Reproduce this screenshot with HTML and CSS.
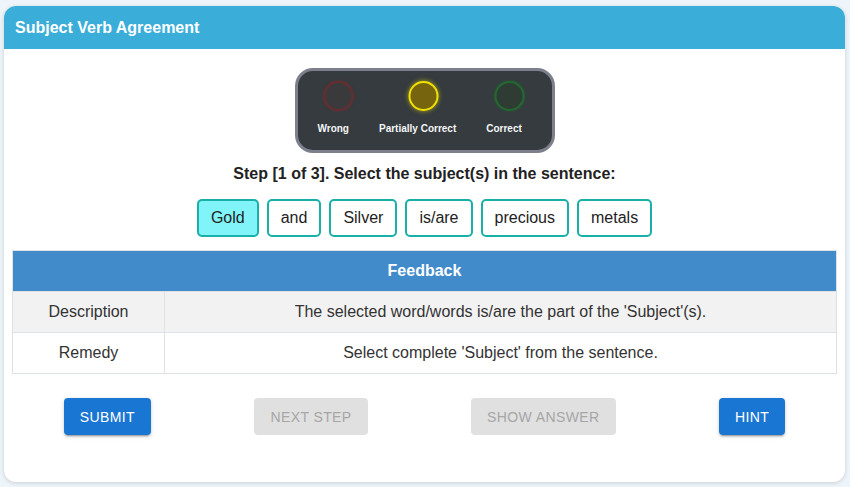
FILE: index.html
```html
<!DOCTYPE html>
<html>
<head>
<meta charset="utf-8">
<link rel="stylesheet" href="styles.css">
</head>
<body>
<div class="card">
  <div class="card-header">Subject Verb Agreement</div>
  <div class="card-body">
    <div class="lights">
      <div class="light-item">
        <span class="light red"></span>
        <span class="light-label">Wrong</span>
      </div>
      <div class="light-item">
        <span class="light yellow"></span>
        <span class="light-label">Partially Correct</span>
      </div>
      <div class="light-item">
        <span class="light green"></span>
        <span class="light-label">Correct</span>
      </div>
    </div>
    <div class="step">Step [1 of 3]. Select the subject(s) in the sentence:</div>
    <div class="words">
      <button class="word selected">Gold</button>
      <button class="word">and</button>
      <button class="word">Silver</button>
      <button class="word">is/are</button>
      <button class="word">precious</button>
      <button class="word">metals</button>
    </div>
    <table class="feedback">
      <thead>
        <tr><th colspan="2">Feedback</th></tr>
      </thead>
      <tbody>
        <tr class="shaded"><td class="label-cell">Description</td><td>The selected word/words is/are the part of the 'Subject'(s).</td></tr>
        <tr><td class="label-cell">Remedy</td><td>Select complete 'Subject' from the sentence.</td></tr>
      </tbody>
    </table>
    <div class="actions">
      <button class="btn primary">Submit</button>
      <button class="btn disabled">Next Step</button>
      <button class="btn disabled">Show Answer</button>
      <button class="btn primary">Hint</button>
    </div>
  </div>
</div>
</body>
</html>
```

FILE: styles.css
```css
html, body {
  margin: 0;
  padding: 0;
}
body {
  background: #eef5fa;
  font-family: "Liberation Sans", Arial, sans-serif;
  color: #212529;
  padding: 6px 5px 5px 4px;
  box-sizing: border-box;
  height: 487px;
}
.card {
  width: 841px;
  height: 476px;
  background: #ffffff;
  border-radius: 12px;
  overflow: hidden;
  box-shadow: 0 1px 4px rgba(0, 0, 0, 0.16);
}
.card-header {
  height: 43px;
  background: #3badd9;
  color: #ffffff;
  font-weight: bold;
  font-size: 16px;
  line-height: 43px;
  padding: 0 11px;
}
.card-body {
  padding: 0 8px;
  display: flex;
  flex-direction: column;
  align-items: center;
}
.lights {
  margin-top: 19px;
  width: 260px;
  height: 85px;
  box-sizing: border-box;
  border: 3px solid #7e7f8d;
  border-radius: 18px;
  background: #353b3e;
  display: flex;
  gap: 30px;
  padding: 10px 0 0 20px;
}
.light-item {
  display: flex;
  flex-direction: column;
  align-items: center;
}
.light {
  display: block;
  width: 26px;
  height: 26px;
  border-radius: 50%;
  transform: translateX(5.5px);
  border: 2px solid transparent;
}
.light.red {
  background: #3a3a3c;
  border-color: rgba(120, 40, 45, 0.7);
  box-shadow: 0 0 3px rgba(160, 40, 40, 0.45);
}
.light.yellow {
  background: #76640e;
  border-color: #f0e000;
  box-shadow: 0 0 5px rgba(240, 225, 0, 0.65);
}
.light.green {
  background: #2f3c33;
  border-color: rgba(30, 120, 45, 0.75);
  box-shadow: 0 0 3px rgba(30, 130, 50, 0.45);
}
.light-label {
  margin-top: 11px;
  color: #f4f6f8;
  font-weight: bold;
  font-size: 10px;
  line-height: 13px;
  white-space: nowrap;
}
.step {
  margin-top: 11px;
  font-size: 16px;
  line-height: 20px;
  font-weight: bold;
  color: #222;
}
.words {
  margin-top: 15px;
  display: flex;
  gap: 8px;
}
.word {
  height: 38px;
  padding: 0 12px;
  border: 2px solid #18b0a8;
  border-radius: 5px;
  background: #ffffff;
  font-family: "Liberation Sans", Arial, sans-serif;
  font-size: 16px;
  color: #222;
}
.word.selected {
  background: #80f4f8;
}
.feedback {
  margin-top: 13px;
  width: 825px;
  border-collapse: collapse;
  font-size: 16px;
  color: #333;
}
.feedback th {
  background: #428bca;
  color: #ffffff;
  font-weight: bold;
  height: 40px;
  padding: 0;
  border: 1px solid #dee2e6;
  border-bottom: none;
  text-align: center;
}
.feedback td {
  height: 40px;
  padding: 0 8px;
  border: 1px solid #dee2e6;
  text-align: center;
}
.feedback td.label-cell {
  width: 135px;
}
.feedback tr.shaded td {
  background: #f2f2f2;
}
.actions {
  margin-top: 24px;
  width: 825px;
  display: flex;
  justify-content: space-around;
}
.btn {
  height: 37px;
  padding: 0 16px;
  border: none;
  border-radius: 4px;
  font-family: "Liberation Sans", Arial, sans-serif;
  font-size: 14px;
  letter-spacing: 0.4px;
  text-transform: uppercase;
}
.btn.primary {
  background: #1976d2;
  color: #ffffff;
  box-shadow: 0 3px 1px -2px rgba(0,0,0,0.2), 0 2px 2px 0 rgba(0,0,0,0.14), 0 1px 5px 0 rgba(0,0,0,0.12);
}
.btn.disabled {
  background: #e0e0e0;
  color: #a6a6a6;
}
```
